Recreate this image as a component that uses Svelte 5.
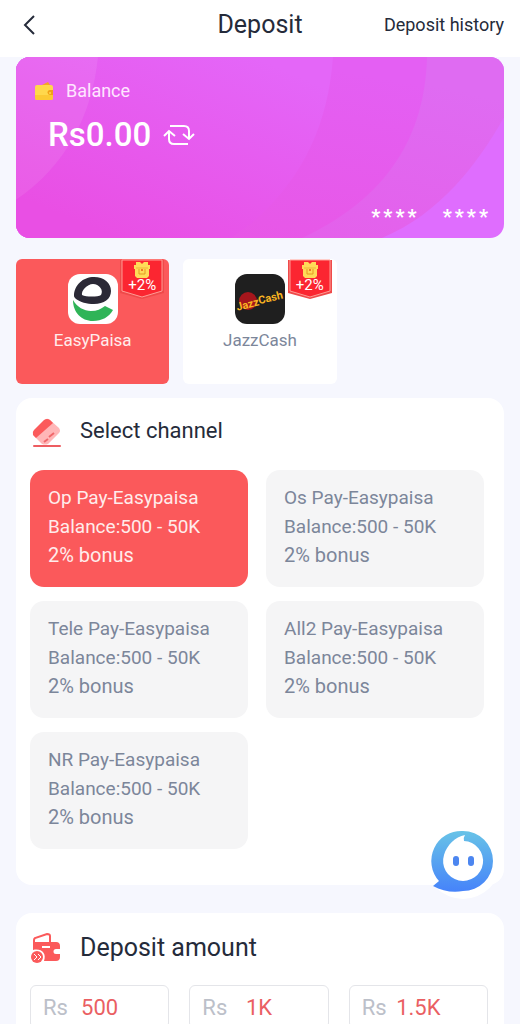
<script lang="ts">
  const methods = [
    { id: 'easypaisa', name: 'EasyPaisa', bonus: '+2%' },
    { id: 'jazzcash', name: 'JazzCash', bonus: '+2%' },
  ];

  const channels = [
    { name: 'Op Pay-Easypaisa', range: '500 - 50K', bonus: '2% bonus' },
    { name: 'Os Pay-Easypaisa', range: '500 - 50K', bonus: '2% bonus' },
    { name: 'Tele Pay-Easypaisa', range: '500 - 50K', bonus: '2% bonus' },
    { name: 'All2 Pay-Easypaisa', range: '500 - 50K', bonus: '2% bonus' },
    { name: 'NR Pay-Easypaisa', range: '500 - 50K', bonus: '2% bonus' },
  ];

  const amounts = ['500', '1K', '1.5K'];

  let method = $state('easypaisa');
  let channel = $state(0);
  let amount = $state('');
  let balance = $state(0);
</script>

<div class="page">
  <header class="navbar">
    <button class="back" aria-label="Back">
      <svg width="12" height="20" viewBox="0 0 12 20" fill="none" stroke="#252b3a" stroke-width="2">
        <path d="M11 1 2 10l9 9" />
      </svg>
    </button>
    <h1>Deposit</h1>
    <a class="history" href="#history">Deposit history</a>
  </header>

  <main>
    <section class="wallet">
      <svg class="wallet-bg" viewBox="0 0 488 180" preserveAspectRatio="none" aria-hidden="true">
        <defs>
          <linearGradient id="base" x1="0" y1="1" x2="0.75" y2="0">
            <stop offset="0.15" stop-color="#e94fe4" />
            <stop offset="1" stop-color="#e466f8" />
          </linearGradient>
          <linearGradient id="band" x1="0.2" y1="1" x2="0.6" y2="0">
            <stop offset="0" stop-color="#e856e5" />
            <stop offset="1" stop-color="#e45ff3" />
          </linearGradient>
          <linearGradient id="outer" x1="0" y1="1" x2="0.6" y2="0">
            <stop offset="0" stop-color="#e65ce8" />
            <stop offset="1" stop-color="#df6bf2" />
          </linearGradient>
        </defs>
        <rect width="488" height="180" fill="#df6dfe" />
        <path d="M0 0H488V60C462 106 424 156 366 180H0Z" fill="url(#outer)" />
        <path d="M0 0H411C409 78 372 140 286 180H0Z" fill="url(#band)" />
        <path d="M0 0H317C312 66 288 120 236 165L215 180H0Z" fill="url(#base)" />
        <path d="M0 0H82C76 58 50 108 0 142Z" fill="#fff" fill-opacity="0.08" />
      </svg>
      <div class="wallet-label">
        <svg width="20" height="20" viewBox="0 0 20 20" aria-hidden="true">
          <path d="M8 4 14 1l2 3Z" fill="#f5a623" />
          <rect x="1" y="4" width="18" height="15" rx="2" fill="#ffd84c" />
          <path d="M1 14h18v3a2 2 0 0 1-2 2H3a2 2 0 0 1-2-2Z" fill="#fcc934" />
          <path d="M19 9h-3a2 2 0 0 0 0 5h3Z" fill="#f2a116" />
          <circle cx="16" cy="12" r="1" fill="#ffd84c" />
        </svg>
        <span>Balance</span>
      </div>
      <div class="wallet-amount">
        <strong>Rs{balance.toFixed(2)}</strong>
        <button class="refresh" aria-label="Refresh balance" onclick={() => (balance = 0)}>
          <svg width="32" height="22" viewBox="0 0 32 22" fill="none" stroke="#fff" stroke-width="2">
            <path d="M7 2h14q5 0 5 5v7M20 10l6 5 5-5" />
            <path d="M25 20H11q-5 0-5-5V8M1 12l5-5 6 5" />
          </svg>
        </button>
      </div>
      <div class="stars">
        {#each [0, 1] as group (group)}
          <div class="star-group">
            {#each [0, 1, 2, 3] as star (star)}
              <span>*</span>
            {/each}
          </div>
        {/each}
      </div>
    </section>

    <div class="methods">
      {#each methods as item (item.id)}
        <button
          class="method"
          class:active={method === item.id}
          aria-pressed={method === item.id}
          onclick={() => (method = item.id)}
        >
          {#if item.id === 'easypaisa'}
            <svg width="50" height="50" viewBox="0 0 50 50" aria-hidden="true">
              <rect width="50" height="50" rx="12" fill="#fff" />
              <path
                fill-rule="evenodd"
                d="M6 22C6 11 15 3 26 3c10 0 17 6 17 14 0 8-7 13-17 13-7 0-14-2-18-5-1-1-2-2-2-3Zm8-1c4 2 16 2 19 0 3-5-2-11-8-11s-12 7-11 11Z"
                fill="#2b2936"
              />
              <path d="M5 26c4 7 11 11 18 11 6 0 10-2 14-5l8 4c-4 7-11 11-20 11C13 47 5 38 5 26Z" fill="#2fb457" />
            </svg>
          {:else}
            <svg width="50" height="50" viewBox="0 0 50 50" aria-hidden="true">
              <rect width="50" height="50" rx="12" fill="#1f1f1f" />
              <circle cx="13" cy="27" r="9" fill="#a5161c" />
              <g transform="rotate(-14 25 25)" class="jazz">
                <text x="0" y="31">Jazz</text>
                <text x="23" y="30">Cash</text>
              </g>
            </svg>
          {/if}
          <span>{item.name}</span>
          <span class="badge">
            <svg class="badge-bg" width="44" height="40" viewBox="0 0 44 40" aria-hidden="true">
              <path d="M0 1H44V34L22 40 0 34Z" fill="#ef4a4a" />
              <path d="M2 1H42V32L22 38 2 32Z" fill="#fb2631" stroke="#ff9c95" stroke-width="1" />
            </svg>
            <svg class="gift" width="16" height="16" viewBox="0 0 16 16" aria-hidden="true">
              <path d="M2 0h4l2 2 2-2h4v3h2v4h-1v7l-2 2H3l-2-2V7H0V3h2Z" fill="#ffdc58" />
              <path d="M2 6h12" stroke="#f0b43a" />
              <path d="M5 7v5h6V7" fill="none" stroke="#e59b22" />
              <path d="M7 7h2v2H7Z" fill="#ee7b28" />
            </svg>
            <span class="badge-text">{item.bonus}</span>
          </span>
        </button>
      {/each}
    </div>

    <section class="panel">
      <div class="panel-title">
        <svg width="32" height="32" viewBox="0 0 32 32" aria-hidden="true">
          <rect x="3" y="28" width="28" height="2" rx="1" fill="#ed5d61" />
          <path d="M16 2q2-1 4 1l9 8q2 3 0 5L18 27q-3 1-6 0l-8-8q-2-3 0-5Z" fill="#ffb6b7" />
          <path d="M14 3q3-2 6 0l3 3L6 21l-3-3q-1-3 1-5Z" fill="#fb5a5b" />
          <path d="m14 25 4-3M19 20l5-4" stroke="#f0686b" stroke-width="2" />
        </svg>
        <h2>Select channel</h2>
      </div>
      <div class="channels">
        {#each channels as item, i (item.name)}
          <button
            class="channel"
            class:active={channel === i}
            aria-pressed={channel === i}
            onclick={() => (channel = i)}
          >
            <span>{item.name}</span>
            <span>Balance:{item.range}</span>
            <span class="bonus">{item.bonus}</span>
          </button>
        {/each}
      </div>
    </section>

    <section class="panel">
      <div class="panel-title amount-title">
        <svg width="32" height="32" viewBox="0 0 32 32" aria-hidden="true">
          <path d="M4 12V8q0-1 1-2L17 2q3 0 3 2v6" fill="none" stroke="#fb5a5b" stroke-width="2" />
          <path
            d="M3 10h23q4 0 4 4v3h-4a2 2 0 0 0 0 5h4v3q0 4-4 4H14c3-8-3-13-11-11Z"
            fill="#fb5a5b"
          />
          <path d="M12 15h8" stroke="#fff" stroke-width="2" />
          <circle cx="7" cy="25" r="6" fill="#fb5a5b" />
          <path d="m4 22 3 3-3 3M8 22l3 3-3 3" fill="none" stroke="#fff" />
        </svg>
        <h2>Deposit amount</h2>
      </div>
      <div class="amounts">
        {#each amounts as value (value)}
          <button class="amount" aria-pressed={amount === value} onclick={() => (amount = value)}>
            <span class="currency">Rs</span>
            <span class="value">{value}</span>
          </button>
        {/each}
      </div>
    </section>
  </main>

  <button class="chat" aria-label="Customer service">
    <svg width="76" height="76" viewBox="0 0 76 76" aria-hidden="true">
      <defs>
        <linearGradient id="bubble" x1="0" y1="0" x2="0" y2="1">
          <stop offset="0" stop-color="#68c3e7" />
          <stop offset="1" stop-color="#4683fa" />
        </linearGradient>
      </defs>
      <circle cx="38" cy="38" r="38" fill="#fff" />
      <path d="M38 8a30 30 0 1 1 0 60C28 70 17 68 8 63l6-5A30 30 0 0 1 38 8Z" fill="url(#bubble)" />
      <path d="M40 12q-2 3-1 6a20 20 0 1 1-20 14C22 22 30 14 40 12Z" fill="#fff" />
      <rect x="28" y="33" width="6" height="10" rx="3" fill="#4c86f0" />
      <rect x="43" y="33" width="6" height="10" rx="3" fill="#4c86f0" />
    </svg>
  </button>
</div>

<style>
  :global(body) {
    margin: 0;
    background: #f6f7fe;
  }

  .page {
    height: 100vh;
    overflow-y: auto;
    scrollbar-width: none;
    font-family: Roboto, 'Liberation Sans', sans-serif;
    color: #252b3a;
    background: #f6f7fe;
  }

  button {
    font: inherit;
    color: inherit;
    border: 0;
    padding: 0;
    background: none;
    cursor: pointer;
  }

  svg {
    display: block;
    flex-shrink: 0;
  }

  .navbar {
    display: grid;
    grid-template-columns: 1fr auto 1fr;
    align-items: center;
    height: 57px;
    padding: 0 16px 8px;
    box-sizing: border-box;
    background: #fff;
  }

  .back {
    justify-self: start;
    padding: 4px 7px;
  }

  h1 {
    margin: 0;
    font-size: 25px;
    line-height: 32px;
    font-weight: 400;
  }

  .history {
    justify-self: end;
    font-size: 18px;
    color: inherit;
    text-decoration: none;
  }

  main {
    padding: 0 16px 28px;
  }

  .wallet {
    position: relative;
    display: flex;
    flex-direction: column;
    height: 181px;
    padding: 22px 16px 14px 18px;
    box-sizing: border-box;
    border-radius: 14px;
    overflow: hidden;
    color: #fff;
  }

  .wallet-bg {
    position: absolute;
    inset: 0;
    width: 100%;
    height: 100%;
  }

  .wallet-label,
  .wallet-amount,
  .stars {
    position: relative;
    display: flex;
    align-items: center;
  }

  .wallet-label {
    gap: 12px;
    font-size: 18px;
    line-height: 24px;
    color: #ffe6ff;
  }

  .wallet-amount {
    gap: 12px;
    margin-top: 10px;
    padding-left: 14px;
  }

  .wallet-amount strong {
    font-size: 33px;
    line-height: 44px;
    font-weight: 500;
  }

  .stars {
    justify-content: flex-end;
    gap: 26px;
    margin-top: auto;
    font-size: 20px;
    line-height: 14px;
    font-weight: 700;
  }

  .star-group {
    display: flex;
    gap: 3px;
  }

  .methods {
    display: grid;
    grid-template-columns: repeat(3, 1fr);
    gap: 14px;
    margin-top: 21px;
  }

  .method {
    position: relative;
    display: flex;
    flex-direction: column;
    align-items: center;
    gap: 4px;
    padding: 15px 0 32px;
    border-radius: 6px;
    background: #fff;
    font-size: 17px;
    line-height: 24px;
    color: #7c869a;
  }

  .method.active {
    background: #fb595b;
    color: #ffeceb;
  }

  .badge {
    position: absolute;
    top: 0;
    right: 5px;
    display: flex;
    flex-direction: column;
    align-items: center;
    width: 44px;
    padding-top: 3px;
    color: #fff;
  }

  .badge-bg {
    position: absolute;
    top: 0;
    left: 0;
  }

  .gift,
  .badge-text {
    position: relative;
  }

  .badge-text {
    font-size: 15px;
    line-height: 14px;
  }

  .jazz {
    font-size: 11px;
    font-weight: 700;
    fill: #f9b522;
  }

  .panel {
    margin-top: 14px;
    padding: 14px 16px 36px 14px;
    border-radius: 16px;
    background: #fff;
  }

  .panel + .panel {
    margin-top: 28px;
  }

  .panel-title {
    display: flex;
    align-items: center;
    gap: 18px;
    height: 42px;
    margin-bottom: 16px;
  }

  h2 {
    margin: 0 0 4px;
    font-size: 22px;
    line-height: 32px;
    font-weight: 400;
  }

  .amount-title h2 {
    margin: 0;
    font-size: 25px;
  }

  .channels {
    display: grid;
    grid-template-columns: repeat(2, 1fr);
    gap: 14px 18px;
    padding-right: 4px;
  }

  .channel {
    display: flex;
    flex-direction: column;
    padding: 13px 18px 17px;
    border-radius: 14px;
    background: #f5f5f6;
    font-size: 19px;
    line-height: 29px;
    text-align: left;
    color: #7c869a;
  }

  .channel.active {
    background: #fb595b;
    color: #ffeceb;
  }

  .bonus {
    font-size: 20px;
  }

  .amounts {
    display: grid;
    grid-template-columns: repeat(3, 1fr);
    gap: 20px;
  }

  .amount {
    display: grid;
    grid-template-columns: 1fr auto 1fr;
    align-items: center;
    height: 44px;
    padding: 0 12px;
    border: 1px solid #e4e5e9;
    border-radius: 6px;
    font-size: 22px;
    text-align: left;
  }

  .currency {
    color: #bcc0c9;
  }

  .value {
    color: #ea5f63;
  }

  .chat {
    position: fixed;
    right: 19px;
    bottom: 125px;
    border-radius: 50%;
  }
</style>
